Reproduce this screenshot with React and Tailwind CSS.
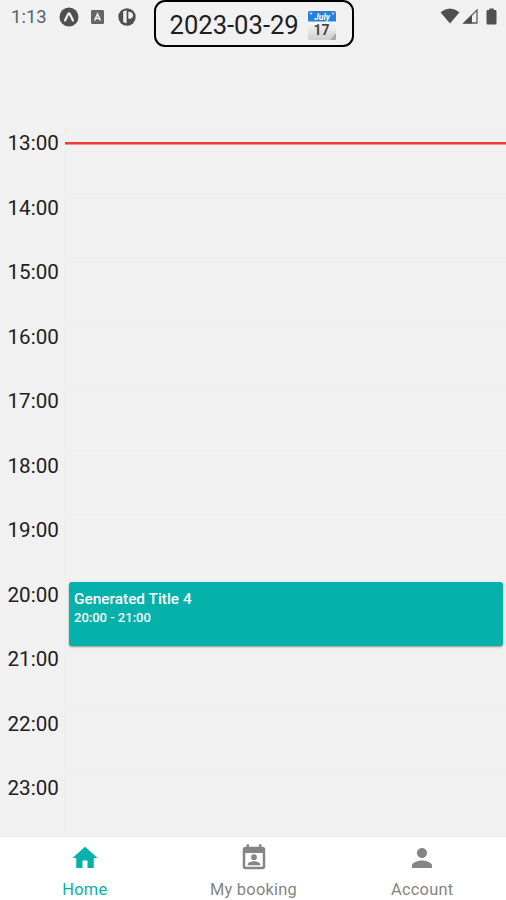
import React from "react";

const hours = ["13:00", "14:00", "15:00", "16:00", "17:00", "18:00", "19:00", "20:00", "21:00", "22:00", "23:00"];

function NotificationIcons() {
  return (
    <div className="flex items-center">
      <svg className="h-5 w-5" viewBox="0 0 20 20">
        <circle cx="10" cy="10" r="9.5" fill="#505050" />
        <path d="M6 13.4 9.2 7Q10 5.8 10.8 7L14 13.4" fill="none" stroke="#f1f1f1" strokeWidth="2.2" strokeLinecap="round" />
      </svg>
      <svg className="ml-[12px] h-[14px] w-[13px]" viewBox="0 0 13 14">
        <rect width="13" height="14" rx="1.2" fill="#666666" />
        <path d="M3.6 10.5 6.5 4 9.4 10.5M4.6 8.5H8.4" fill="none" stroke="#f1f1f1" strokeWidth="1.6" />
      </svg>
      <svg className="ml-[14px] h-[18px] w-[18px]" viewBox="0 0 18 18">
        <circle cx="9" cy="9" r="8.7" fill="#505050" />
        <path d="M5.2 3.4Q6.6 2.6 8.6 2.6V15.3Q6.6 15 5.2 14Z" fill="#f1f1f1" />
        <path d="M10.3 3.8Q15 4 15 7.4T10.3 10.8Z" fill="#f1f1f1" />
      </svg>
    </div>
  );
}

function SystemIcons() {
  return (
    <div className="flex items-center">
      <svg className="h-4 w-[20px]" viewBox="0 0 20 16">
        <path d="M0.5 4.2Q10-3.2 19.5 4.2L10 15.5Z" fill="#505050" />
      </svg>
      <svg className="ml-[2px] h-4 w-4" viewBox="0 0 16 16">
        <path d="M15 2V15H2Z" fill="none" stroke="#606060" strokeWidth="1.3" />
        <path d="M1 15.5 10 6.5V15.5Z" fill="#505050" />
      </svg>
      <svg className="ml-[8px] h-[17px] w-[11px]" viewBox="0 0 11 17">
        <path d="M3.3 0.5H7.7V2H9.2Q10.5 2 10.5 3.3V15.3Q10.5 16.5 9.2 16.5H1.8Q0.5 16.5 0.5 15.3V3.3Q0.5 2 1.8 2H3.3Z" fill="#505050" />
      </svg>
    </div>
  );
}

function CalendarGlyph() {
  return (
    <svg className="ml-[8px] h-[30px] w-[30px]" viewBox="0 0 30 30">
      <defs>
        <linearGradient id="paper" x1="0" y1="0" x2="0" y2="1">
          <stop offset="0" stopColor="#ffffff" />
          <stop offset="1" stopColor="#cfcfcf" />
        </linearGradient>
      </defs>
      <path d="M1 8H29V24L24 29H3Q1 29 1 27Z" fill="url(#paper)" />
      <path d="M29 22 23 29H28Q29 29 29 28Z" fill="#a9a9a9" />
      <path d="M29 22Q25 24 23 29L22 24Z" fill="#d4d4d4" />
      <path d="M1 2Q1 0 3 0H27Q29 0 29 2V10.5H1Z" fill="#2581dc" />
      <circle cx="4" cy="2.5" r="1.2" fill="#a6cdf4" />
      <circle cx="26" cy="2.5" r="1.2" fill="#a6cdf4" />
      <text x="15" y="8.5" textAnchor="middle" fontFamily="Roboto, sans-serif" fontSize="8.5" fontWeight="700" fontStyle="italic" fill="#fff">July</text>
      <text x="14.5" y="23.5" textAnchor="middle" fontFamily="Roboto, sans-serif" fontSize="14" fontWeight="700" fill="#484848">17</text>
    </svg>
  );
}

function Tab({ label, active, children }) {
  return (
    <div className={`flex flex-1 flex-col items-center pt-[6px] pl-px ${active ? "text-[#04b1ab]" : "text-[#858585]"}`}>
      <svg className="h-[30px] w-[30px] shrink-0" viewBox="0 0 24 24" fill="currentColor">{children}</svg>
      <span className="mt-[6px] text-[16.4px] leading-[22px] tracking-[0.25px]">{label}</span>
    </div>
  );
}

export default function App() {
  return (
    <div className="flex h-[900px] w-[506px] flex-col overflow-hidden bg-[#f1f1f1] font-['Roboto',sans-serif] text-[#202020]">
      <header className="grid h-[128px] shrink-0 grid-cols-[154px_200px_1fr] items-start">
        <div className="flex h-[33px] items-center pl-[11px]">
          <span className="w-[48px] pt-[2px] text-[18.5px] text-[#606060]">1:13</span>
          <NotificationIcons />
        </div>
        <button className="flex h-[47px] items-center rounded-[11px] border-2 border-black pt-[4px] pl-[13.5px] text-[25.6px]">
          <span className="whitespace-nowrap">2023-03-29</span>
          <CalendarGlyph />
        </button>
        <div className="flex h-8 items-center justify-end pr-[9px]">
          <SystemIcons />
        </div>
      </header>

      <main className="relative min-h-0 flex-1 overflow-hidden">
        {hours.map((hour) => (
          <div key={hour} className="flex h-[64.5px]">
            <div className="w-[66px] shrink-0 border-r border-[#eeeeee] pl-[7.5px] text-[20.6px] leading-[31px]">{hour}</div>
            <div className="flex-1 border-t border-[#eeeeee]" />
          </div>
        ))}
        <div className="absolute top-[14px] right-0 left-[65px] h-[3px] border-b border-[#f4908e] bg-[#f23b38]" />
        <div className="absolute top-[454px] right-[3px] left-[69px] h-[64px] rounded-[3px] bg-[#04b1ab] pt-[8px] pl-[5px] font-medium text-white shadow-[0_1px_2px_rgba(0,0,0,0.4)]">
          <div className="text-[15.4px] leading-[19px]">Generated Title 4</div>
          <div className="text-[13px] leading-[18px]">20:00 - 21:00</div>
        </div>
      </main>

      <nav className="flex h-[64px] shrink-0 border-t border-[#e9e9e9] bg-white">
        <Tab label="Home" active>
          <path d="M10 20v-6h4v6h5v-8h3L12 3 2 12h3v8z" />
        </Tab>
        <Tab label="My booking">
          <path d="M19 3h-1V1h-2v2H8V1H6v2H5c-1.1 0-2 .9-2 2v14c0 1.1.9 2 2 2h14c1.1 0 2-.9 2-2V5c0-1.1-.9-2-2-2zm0 16H5V8h14v11zM12 9a2.3 2.3 0 1 1 0 4.6A2.3 2.3 0 0 1 12 9zm5 8.7H7v-.8c0-1.6 3.3-2.4 5-2.4s5 .8 5 2.4z" />
        </Tab>
        <Tab label="Account">
          <path d="M12 12c2.21 0 4-1.79 4-4s-1.79-4-4-4-4 1.79-4 4 1.79 4 4 4zm0 2c-2.67 0-8 1.34-8 4v2h16v-2c0-2.66-5.33-4-8-4z" />
        </Tab>
      </nav>
    </div>
  );
}
